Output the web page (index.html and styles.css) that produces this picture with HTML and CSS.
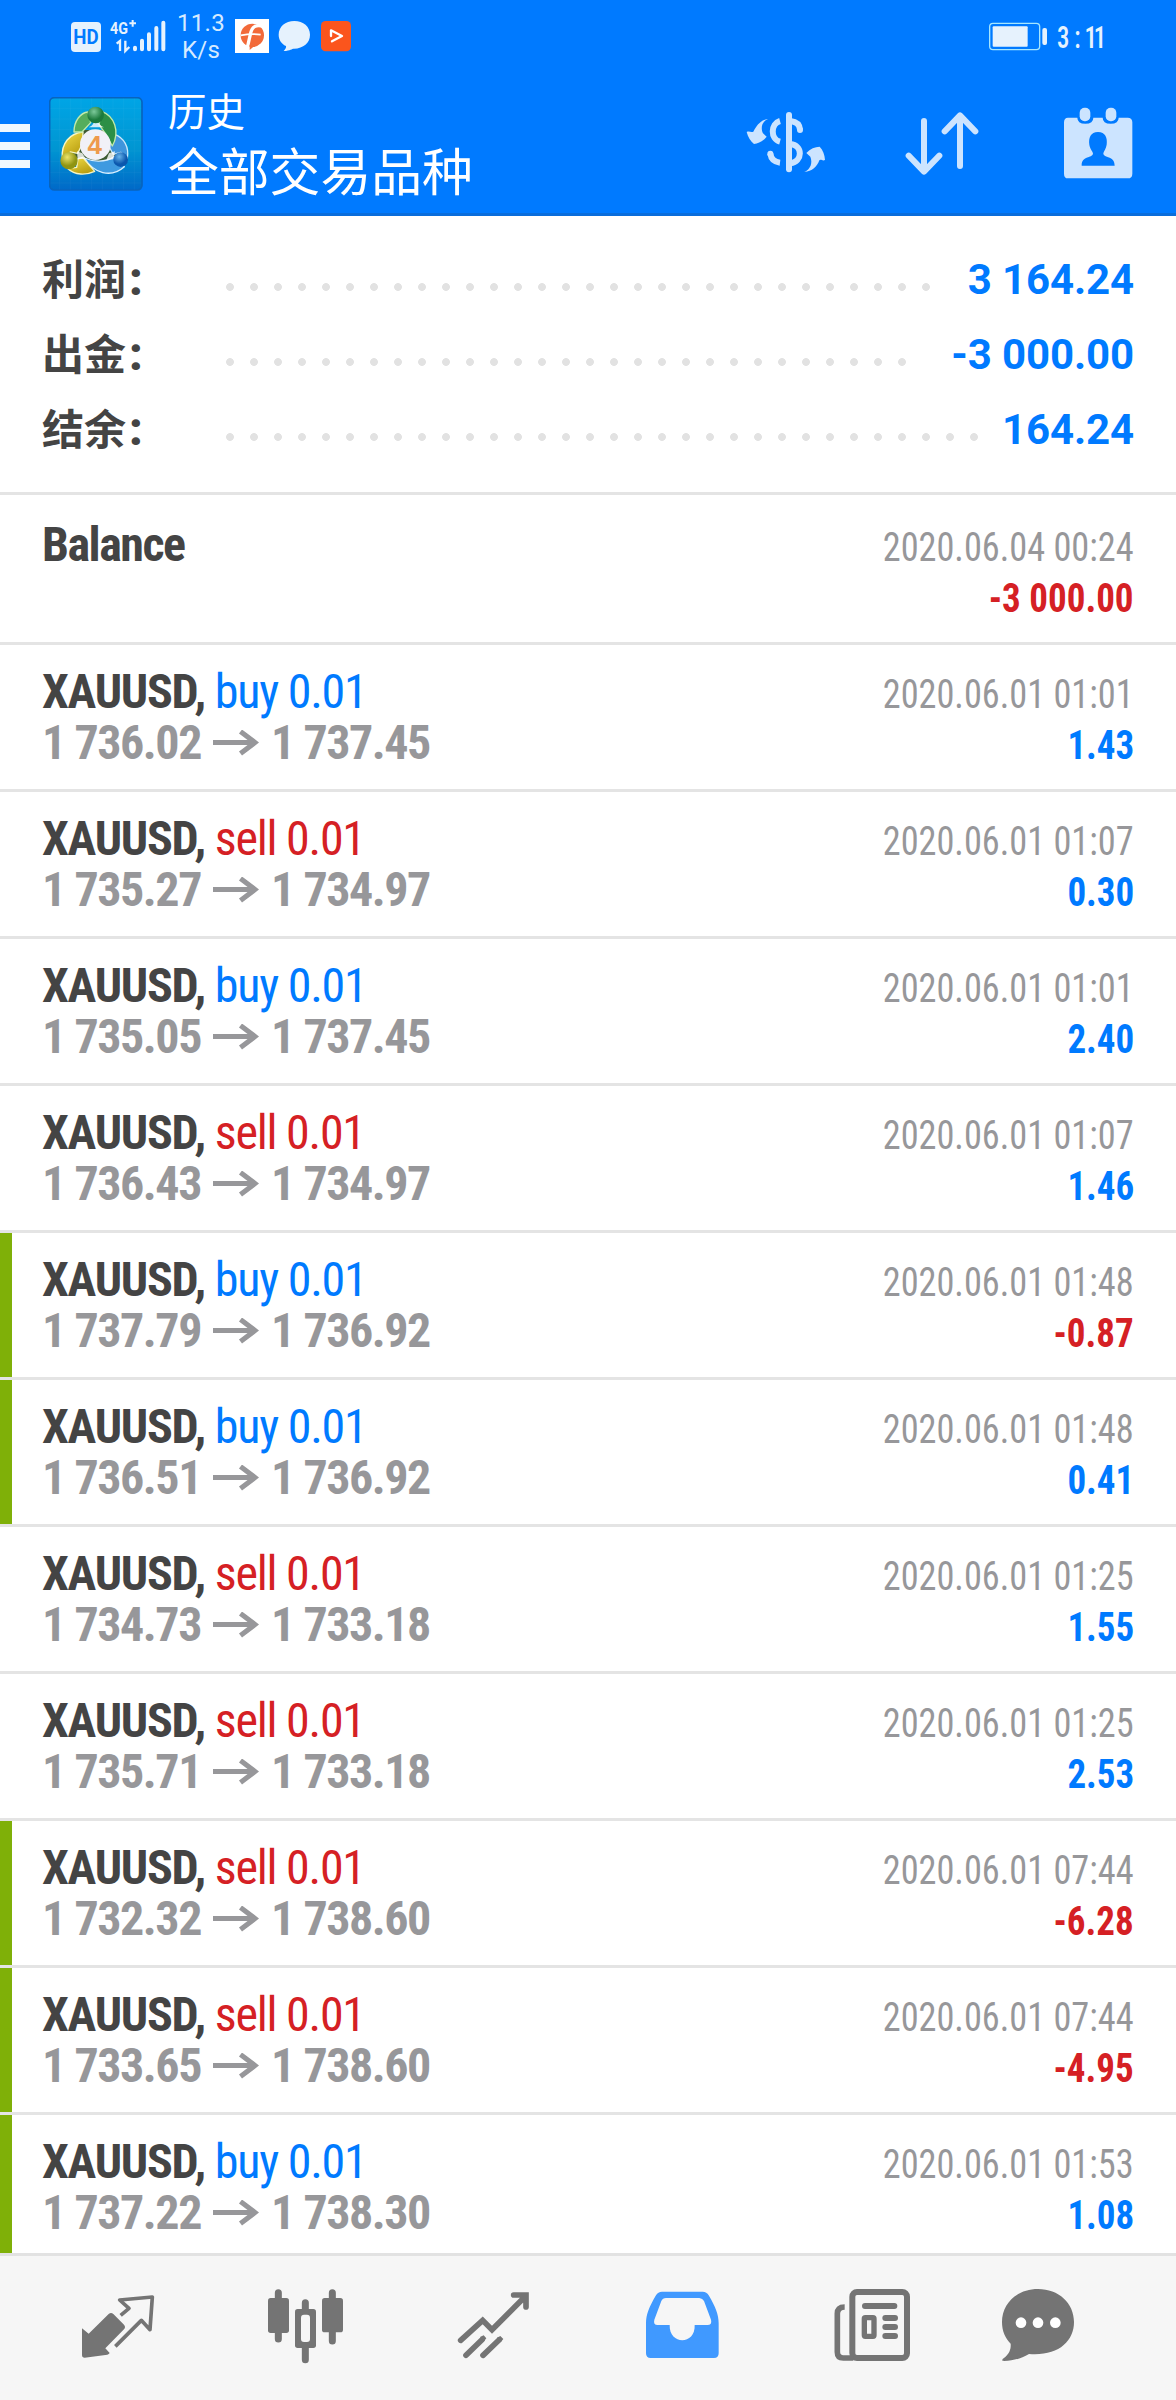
FILE: index.html
```html
<!DOCTYPE html>
<html lang="zh">
<head>
<meta charset="utf-8">
<title>历史</title>
<link rel="stylesheet" href="styles.css">
</head>
<body>
<header class="header">
  <div class="status">
    <svg class="st-signal" viewBox="210 48 291 120" width="97" height="40">
      <rect x="213" y="66" width="90" height="90" rx="12" fill="#e6f2fd"/>
      <text x="258" y="131" class="hd" textLength="76" lengthAdjust="spacingAndGlyphs">HD</text>
      <text x="330" y="103" class="g4" textLength="54" lengthAdjust="spacingAndGlyphs">4G</text>
      <path d="M388 70h20M398 60v20" stroke="#e6f2fd" stroke-width="6"/>
      <path d="M350 131l10-8v30M376 122v31l12-12" fill="none" stroke="#e6f2fd" stroke-width="7"/>
      <path d="M405 143v5M426 122v26M447 103v45M469 84v64M490 68v80" stroke="#e6f2fd" stroke-width="12" stroke-linecap="round"/>
    </svg>
    <div class="net"><span>11.3</span><span>K/s</span></div>
    <svg class="st-apps" viewBox="702 48 354 120" width="118" height="40">
      <path fill="#fff" d="M705 57h102v102H705z"/>
      <circle cx="757" cy="106" r="35" fill="#f26a3a"/>
      <path d="M792 79c-26-6-36 0-41 24l-10 44" fill="none" stroke="#fff" stroke-width="10"/>
      <path d="M722 106q34-6 60-2" fill="none" stroke="#fff" stroke-width="5"/>
      <path d="M749 136v14l14-12z" fill="#f26a3a"/>
      <path d="M883 63c27 0 47 17 47 41 0 25-20 41-48 42-7 0-10 6-31 7 6-7 8-10 7-15-14-7-22-19-22-34 0-24 20-41 47-41z" fill="#e6f2fd"/>
      <rect x="963" y="63" width="90" height="91" rx="14" fill="#fb551d"/>
      <path d="M993 108V91l33 17-30 16" fill="none" stroke="#fff" stroke-width="7" stroke-linejoin="round" stroke-linecap="round"/>
    </svg>
    <svg class="st-battery" viewBox="804 48 180 120" width="60" height="40">
      <rect x="809" y="70" width="150" height="79" rx="10" fill="none" stroke="#a5e6ff" stroke-width="4"/>
      <rect x="818" y="79" width="105" height="61" rx="3" fill="#e6f2fd"/>
      <rect x="967" y="84" width="14" height="51" rx="6" fill="#e6f2fd"/>
    </svg>
    <div class="st-time">3<span>:</span>11</div>
  </div>
  <div class="toolbar">
    <div class="burger"><i></i><i></i><i></i></div>
    <svg class="logo" viewBox="148 51 282 282" width="94" height="94">
      <defs>
        <linearGradient id="sky" x2="0" y2="1"><stop offset="0" stop-color="#00a5e6"/><stop offset=".55" stop-color="#0096d2"/><stop offset="1" stop-color="#0069c8"/></linearGradient>
        <radialGradient id="gn" cx=".4" cy=".3"><stop offset="0" stop-color="#7cc99a"/><stop offset="1" stop-color="#1c7a3c"/></radialGradient>
        <radialGradient id="yl" cx=".4" cy=".3"><stop offset="0" stop-color="#eee46a"/><stop offset="1" stop-color="#8f9412"/></radialGradient>
        <radialGradient id="bl" cx=".4" cy=".3"><stop offset="0" stop-color="#68b4ea"/><stop offset="1" stop-color="#0b57ad"/></radialGradient>
        <linearGradient id="gold" x2=".6" y2="1"><stop offset="0" stop-color="#f3e04a"/><stop offset="1" stop-color="#b89d10"/></linearGradient>
      </defs>
      <rect x="150" y="53" width="277" height="277" rx="14" fill="url(#sky)" stroke="#0864bd" stroke-width="5"/>
      <path d="M180 55v274M212 55v274M244 55v274M276 55v274M308 55v274M340 55v274M372 55v274M404 55v274M152 85h274M152 117h274M152 149h274M152 181h274M152 213h274M152 245h274M152 277h274M152 309h274" stroke="#fff" stroke-opacity=".06" stroke-width="2"/>
      <path d="M236 150h100l24 84-36 24-36-16-38 20-45-25z" fill="#3c5a33"/>
      <g stroke-width="4" stroke-linejoin="round">
        <path d="M345 163c28 10 44 38 38 72l-20-18-22 6-14-25z" fill="#3f95dc" stroke="#c9e8fb"/>
        <path d="M254 234c22 10 60 16 90-4l30 30c-40 36-92 20-120-26z" fill="#3e9ae0" stroke="#d8efff"/>
        <path d="M250 156c-40 4-66 34-62 78l24-18 22 4 14-28z" fill="url(#gold)" stroke="#f7f6c5"/>
        <path d="M205 266c20 20 54 20 80 8l-36-42-14 4-4 26z" fill="url(#gold)" stroke="#f7f6c5"/>
        <path d="M223 156c0-34 20-58 42-60l8 32-26 28z" fill="#55ad5c" stroke="#c2eaaa"/>
        <path d="M306 94c38 14 56 60 32 104l-20-36-20-28z" fill="#2c8f46" stroke="#c2eaaa"/>
      </g>
      <path d="M267 142q18-8 17-26h10q1 18 19 26zM232 214l16 6 10 16-24 2zM346 214l-18 6-8 20 22-2z" fill="#fff" opacity=".8"/>
      <circle cx="288" cy="105" r="25" fill="url(#gn)"/>
      <circle cx="208" cy="242" r="26" fill="url(#yl)"/>
      <circle cx="363" cy="239" r="22" fill="url(#bl)"/>
      <circle cx="287" cy="194" r="46" fill="#f1f1f7"/>
      <text x="285" y="223" class="four">4</text>
    </svg>
    <div class="titles"><div class="t1">历史</div><div class="t2">全部交易品种</div></div>
    <svg class="tool-dollar" viewBox="60 300 276 300" width="92" height="100">
      <g fill="none" stroke="#cce4ff" stroke-width="18">
        <path d="M207 345v163" stroke-linecap="round"/>
        <path d="M180 363c-28 8-30 54 0 62M151 461c2 15 12 25 29 27"/>
        <path d="M151 461v1M240 390v-1" stroke-linecap="round"/>
        <path d="M211 363c17 2 28 10 29 26M211 432c38 4 38 52 0 58"/>
      </g>
      <path d="M144 357c-20 8-22 30-15 43l11 10c-11 14-24 20-38 22-10-8-18-20-22-36 8-4 12 2 20-1 10-20 24-36 44-38z" fill="#cce4ff"/>
      <path d="M253 516c20-10 25-28 18-46l-12-11c12-13 26-19 40-19 10 10 15 25 16 40-8 4-12-4-17 1-6 18-22 34-45 35z" fill="#cce4ff"/>
    </svg>
    <svg class="tool-sort" viewBox="534 300 264 300" width="88" height="100">
      <path d="M612 363v150M566 467l46 48 46-48M720 498V348M674 394l46-48 46 48" fill="none" stroke="#cce4ff" stroke-width="18" stroke-linecap="round" stroke-linejoin="round"/>
    </svg>
    <svg class="tool-account" viewBox="1014 300 240 300" width="80" height="100">
      <path d="M1044 353h28q0 18 24 18t24-18h28q0 18 24 18t24-18h27q14 0 14 14v154q0 14-14 14h-179q-12 0-12-14V367q0-14 12-14z" fill="#cce4ff"/>
      <rect x="1079" y="323" width="32" height="41" rx="15" fill="#cce4ff"/>
      <rect x="1157" y="323" width="32" height="41" rx="15" fill="#cce4ff"/>
      <path d="M1134 396c22 0 29 18 26 38-2 13-8 18-10 26 1 16 34 6 34 37h-99c0-31 33-21 34-37-2-8-9-13-11-26-3-20 4-38 26-38z" fill="#007aff"/>
    </svg>
  </div>
</header>
<main class="content">
  <section class="summary">
    <div class="sum"><b>利润<span>:</span></b><span class="leader"><i></i></span><strong>3 164.24</strong></div>
    <div class="sum"><b>出金<span>:</span></b><span class="leader"><i></i></span><strong>-3 000.00</strong></div>
    <div class="sum"><b>结余<span>:</span></b><span class="leader"><i></i></span><strong>164.24</strong></div>
  </section>
  <ul class="deals" id="deals">
    <li class="deal first"><div class="l"><div class="sym"><b>Balance</b></div></div><div class="r"><time>2020.06.04 00:24</time><em class="neg">-3 000.00</em></div></li>
  </ul>
</main>
<nav class="nav">
  <svg viewBox="72 48 564 432">
    <path d="M246 265l20 16 60-59q7-6 14 0l32 32q6 7 0 14l-56 57 13 14q-2 4-7 5l-68 9q-8 0-8-8z" fill="#747474"/>
    <path d="M362 226l25-21-28-25 98-9-7 98-26-28-78 78" fill="none" stroke="#747474" stroke-width="11" stroke-linejoin="round"/>
  </svg>
  <svg viewBox="636 48 564 432">
    <path d="M835 158v139M997 158v145M916 188v25M916 323v36" stroke="#747474" stroke-width="21" stroke-linecap="round"/>
    <rect x="804" y="174" width="63" height="105" rx="8" fill="#747474"/>
    <rect x="966" y="174" width="63" height="103" rx="8" fill="#747474"/>
    <rect x="885" y="207" width="63" height="117" rx="8" fill="#747474"/>
    <rect x="903" y="224" width="27" height="82" rx="9" fill="#f6f6f6"/>
  </svg>
  <svg viewBox="0 48 564 432">
    <path d="M182 301l66-60 28 28 101-101M341 165h37v36M198 346l48-47M249 346l48-46" fill="none" stroke="#747474" stroke-width="17" stroke-linecap="round"/>
    <path d="M240 291l11-5 8 9-8 10zM291 293l10-5 9 9-8 10z" fill="#747474"/>
  </svg>
  <svg viewBox="564 48 564 432">
    <path fill-rule="evenodd" d="M786 155h122q12 0 18 11c20 34 30 58 30 84v90q0 14-14 14H752q-14 0-14-14v-90c0-26 10-50 30-84q6-11 18-11zM798 174q-10 0-14 9l-21 56q-4 16 10 16h36c-2 61 78 61 75 0h38q15 0 11-16l-21-56q-4-7-14-9z" fill="#4099ff"/>
  </svg>
  <svg viewBox="0 48 564 432">
    <rect x="229" y="156" width="164" height="198" rx="14" fill="none" stroke="#747474" stroke-width="18"/>
    <path d="M206 201q-22 0-22 20v115q0 18 18 18h30" fill="none" stroke="#747474" stroke-width="17"/>
    <path d="M267 198h88M328 234h29M328 261h29M328 288h29" stroke="#747474" stroke-width="18" stroke-linecap="round"/>
    <rect x="265" y="233" width="29" height="56" rx="3" fill="none" stroke="#747474" stroke-width="16"/>
  </svg>
  <svg viewBox="564 48 564 432">
    <path d="M786 147c62 0 108 42 108 99 0 60-50 103-135 96-24 14-46 20-75 21-8 0-6-5 0-9 18-14 21-28 20-43-16-16-26-38-26-65 0-57 46-99 108-99z" fill="#747474"/>
    <circle cx="735" cy="248" r="16" fill="#fff"/><circle cx="786" cy="248" r="16" fill="#fff"/><circle cx="838" cy="248" r="16" fill="#fff"/>
  </svg>
</nav>
<script src="deals.js"></script>
</body>
</html>
```
FILE: deals.js
```js
const deals = [
  ["buy", "1 736.02", "1 737.45", "01:01", "1.43", 0],
  ["sell", "1 735.27", "1 734.97", "01:07", "0.30", 0],
  ["buy", "1 735.05", "1 737.45", "01:01", "2.40", 0],
  ["sell", "1 736.43", "1 734.97", "01:07", "1.46", 0],
  ["buy", "1 737.79", "1 736.92", "01:48", "-0.87", 1],
  ["buy", "1 736.51", "1 736.92", "01:48", "0.41", 1],
  ["sell", "1 734.73", "1 733.18", "01:25", "1.55", 0],
  ["sell", "1 735.71", "1 733.18", "01:25", "2.53", 0],
  ["sell", "1 732.32", "1 738.60", "07:44", "-6.28", 1],
  ["sell", "1 733.65", "1 738.60", "07:44", "-4.95", 1],
  ["buy", "1 737.22", "1 738.30", "01:53", "1.08", 1]
];
const arrow = '<svg class="arrow" viewBox="0 0 46 26" width="46" height="26"><path d="M0 12.5h41M27.500 1.500L42 12.500 27.500 23.500" fill="none" stroke="#97979a" stroke-width="5"/></svg>';
document.getElementById("deals").insertAdjacentHTML("beforeend", deals.map(([side, open, close, time, profit, marked]) =>
  `<li class="deal${marked ? " marked" : ""}"><div class="l"><div class="sym"><b>XAUUSD,</b> <span class="${side}">${side} 0.01</span></div>` +
  `<div class="price"><span>${open}</span>${arrow}<span>${close}</span></div></div>` +
  `<div class="r"><time>2020.06.01 ${time}</time><em class="${profit[0] === "-" ? "neg" : "pos"}">${profit}</em></div></li>`).join(""));
```
FILE: styles.css
```css
* { box-sizing: border-box; }
body {
  margin: 0;
  width: 1176px;
  height: 2400px;
  overflow: hidden;
  display: flex;
  flex-direction: column;
  background: #fff;
  font-family: Roboto, "Noto Sans CJK SC", sans-serif;
}
svg { display: block; flex: none; }
i, em { font-style: normal; }

.header { height: 216px; background: #007aff; border-bottom: 3px solid #0a6ddb; flex: none; }
.status { display: flex; height: 72px; padding: 16px 0 0 70px; }
.hd { font: bold 58px Roboto, sans-serif; fill: #007aff; text-anchor: middle; }
.g4 { font: bold 52px Roboto, sans-serif; fill: #e6f2fd; }
.net { width: 54px; margin-left: 7px; margin-top: -6px; font-size: 24px; line-height: 27px; color: #d5eaff; text-align: center; letter-spacing: .3px; }
.net span { display: block; }
.st-apps { margin-left: 6px; }
.st-battery { margin-left: auto; }
.st-time { width: 119px; margin-left: 9px; transform: scaleX(.8); transform-origin: left; font-family: "Roboto Condensed", Roboto, sans-serif; font-stretch: 75%; font-weight: 500; font-size: 31px; line-height: 43px; letter-spacing: -4px; color: #e6f2fd; }
.st-time span { margin: 0 9px 0 10px; }

.toolbar { display: flex; height: 141px; padding-right: 38px; }
.burger { width: 30px; padding-top: 52px; display: flex; flex-direction: column; gap: 10px; }
.burger i { height: 8px; background: #f0f8ff; }
.logo { margin: 25px 0 0 19px; }
.four { font: bold 78px "Liberation Sans", sans-serif; fill: #ee9a4c; text-anchor: middle; }
.titles { margin-left: 25px; color: #fff; font-family: "Noto Sans CJK SC", sans-serif; white-space: nowrap; }
.t1 { font-size: 38.500px; line-height: 50px; margin-top: 12px; }
.t2 { font-size: 50.800px; line-height: 66px; margin-top: 2px; }
.toolbar > .tool-dollar { margin: 28px 66px 0 auto; }
.tool-sort { margin: 28px 72px 0 0; }
.tool-account { margin-top: 28px; }

.content { flex: 1; min-height: 0; overflow: hidden; }
.summary { height: 279px; padding: 26px 42px 0; border-bottom: 3px solid #e4e4e4; }
.sum { display: flex; height: 75px; line-height: 75px; font-size: 42px; }
.sum b { width: 176px; line-height: 69px; color: #444; font-family: "Noto Sans CJK SC", sans-serif; }
.sum b span { margin-left: 3px; font-family: Roboto, sans-serif; font-size: 46px; font-weight: 900; line-height: 1; }
.sum strong { color: #007aff; letter-spacing: -.12px; }
.leader { flex: 1; margin-right: 15px; padding-top: 33px; }
.leader i { display: block; height: 24px; width: round(down, 100%, 24px); background: radial-gradient(circle at 12px 12px, #e2e2e2 3.500px, transparent 4.300px) 0 0 / 24px 24px repeat-x; }

.deals { margin: 0; padding: 0; list-style: none; }
.deal { display: flex; justify-content: space-between; height: 147px; padding: 22px 42px 0; border-bottom: 3px solid #e4e4e4; font-stretch: 75%; font-family: "Roboto Condensed", Roboto, sans-serif; position: relative; white-space: nowrap; }
.first { height: 150px; padding-top: 25px; }
.marked::before { content: ""; position: absolute; left: 0; top: 0; bottom: 0; width: 12px; background: #7fb008; }
.sym { font-size: 48px; line-height: 50px; letter-spacing: -1.250px; }
.first .sym { letter-spacing: -1.500px; }
.sym b { color: #444; }
.price { display: flex; font-size: 48px; line-height: 51px; font-weight: bold; letter-spacing: -1.450px; color: #97979a; }
.arrow { margin: 13px 12px 0; }
.r { display: flex; flex-direction: column; align-items: flex-end; padding-top: 2px; font-size: 40px; line-height: 51px; }
.r time { color: #97979a; transform: scaleX(.907); transform-origin: right; }
.r em { font-weight: bold; transform: scaleX(.925); transform-origin: right; }
.buy, .pos { color: #007aff; }
.sell, .neg { color: #d52024; }

.nav { flex: none; height: 147px; border-top: 3px solid #e2e2e2; background: #f6f6f6; display: flex; padding-left: 24px; }
.nav svg { width: 188px; height: 144px; }
```
